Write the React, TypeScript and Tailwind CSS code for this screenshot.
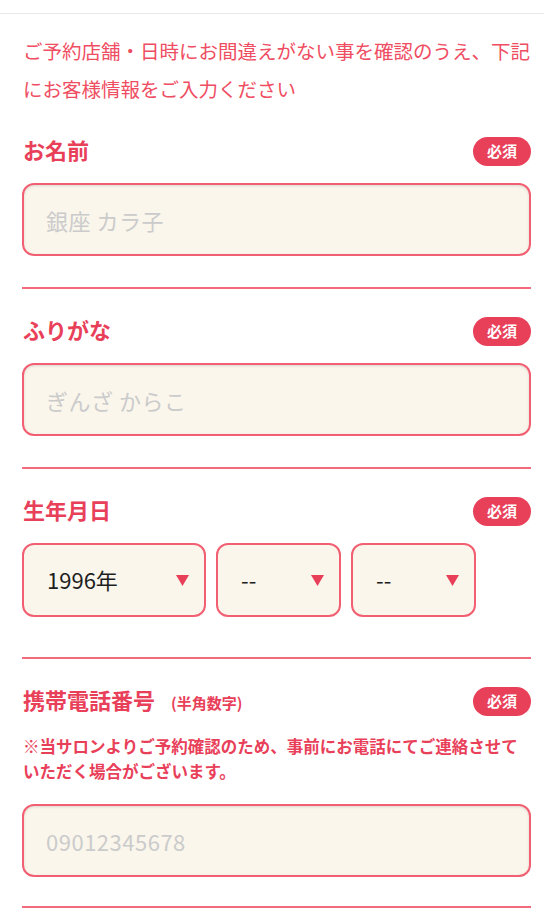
const font = "font-['Noto_Sans_CJK_JP','Noto_Sans',sans-serif]"

function Required() {
  return (
    <span className="flex h-[29px] w-[58px] items-center justify-center rounded-full bg-[#e9405a] text-[15px] font-bold text-white">
      必須
    </span>
  )
}

function Header({ label, sub }: { label: string; sub?: string }) {
  return (
    <div className="flex h-[29px] items-center justify-between">
      <h2 className="pb-[6px] pl-[1px] text-[22px] font-bold leading-none text-[#e9405a]">
        {label}
        {sub && <span className="ml-[16px] text-[15px]">{sub}</span>}
      </h2>
      <Required />
    </div>
  )
}

function TextField({ placeholder }: { placeholder: string }) {
  return (
    <input
      type="text"
      placeholder={placeholder}
      className="block h-[73px] w-full rounded-[12px] border-2 border-[#f25f72] bg-[#faf6ec] px-[22px] text-[22px] tracking-[0.5px] text-[#222] shadow-[inset_0_1px_3px_rgba(0,0,0,0.12)] outline-none placeholder:text-[#cbcbcb]"
    />
  )
}

function Select({ value, width }: { value: string; width: string }) {
  return (
    <div
      className={`flex h-[74px] ${width} items-center justify-between rounded-[12px] border-2 border-[#f25f72] bg-[#faf6ec] pl-[23px] pr-[15px] text-[22px] text-[#1e1e1e]`}
    >
      <span className="pb-[2px]">{value}</span>
      <svg width="13" height="11" viewBox="0 0 13 11">
        <polygon points="0,0 13,0 6.5,11" fill="#e9405a" />
      </svg>
    </div>
  )
}

function Divider({ gap }: { gap: string }) {
  return <div className={`${gap} h-[2px] bg-[#f26a7b]`} />
}

export default function App() {
  return (
    <div className={`min-h-screen bg-white ${font}`}>
      <div className="pt-[13px]">
        <div className="h-px bg-[#e8e8e8]" />
      </div>

      <div className="pl-[22px] pr-[13px]">
        {/* Intro */}
        <p className="whitespace-nowrap pl-[1px] pt-[18px] text-[19.5px] leading-[38px] text-[#ef4d62]">
          ご予約店舗・日時にお間違えがない事を確認のうえ、下記
          <br />
          にお客様情報をご入力ください
        </p>

        {/* Name */}
        <section className="pt-[29px]">
          <Header label="お名前" />
          <div className="mt-[17px]">
            <TextField placeholder="銀座 カラ子" />
          </div>
          <Divider gap="mt-[31px]" />
        </section>

        {/* Furigana */}
        <section className="pt-[28px]">
          <Header label="ふりがな" />
          <div className="mt-[17px]">
            <TextField placeholder="ぎんざ からこ" />
          </div>
          <Divider gap="mt-[31px]" />
        </section>

        {/* Birthday */}
        <section className="pt-[28px]">
          <Header label="生年月日" />
          <div className="mt-[17px] flex gap-[10px]">
            <Select value="1996年" width="w-[184px]" />
            <Select value="--" width="w-[125px]" />
            <Select value="--" width="w-[125px]" />
          </div>
          <Divider gap="mt-[40px]" />
        </section>

        {/* Phone */}
        <section className="pt-[28px]">
          <Header label="携帯電話番号" sub="(半角数字)" />
          <p className="mt-[18px] whitespace-nowrap pl-[1px] text-[16.5px] font-bold leading-[25px] text-[#e9405a]">
            ※当サロンよりご予約確認のため、事前にお電話にてご連絡させて
            <br />
            いただく場合がございます。
          </p>
          <div className="mt-[20px]">
            <TextField placeholder="09012345678" />
          </div>
          <Divider gap="mt-[29px]" />
        </section>
      </div>
    </div>
  )
}
